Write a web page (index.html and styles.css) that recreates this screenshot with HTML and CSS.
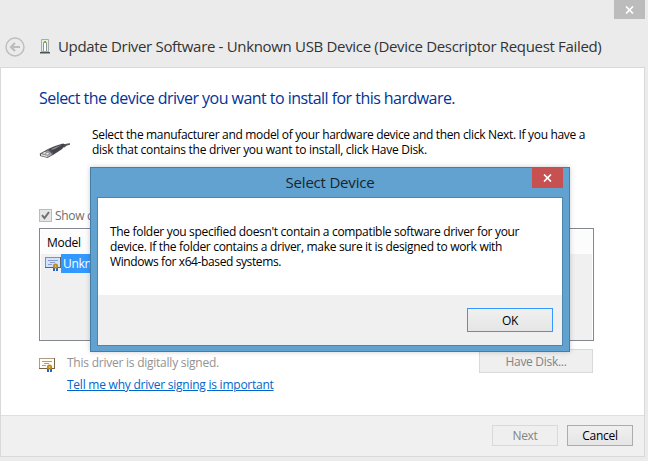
FILE: index.html
```html
<!DOCTYPE html>
<html lang="en">
<head>
<meta charset="utf-8">
<title>Update Driver Software</title>
<link rel="stylesheet" href="styles.css">
</head>
<body>
<svg class="defs" width="0" height="0">
  <symbol id="certificate" viewBox="0 0 16 16">
    <path class="frame-dark" d="M0 1h16v11H0z"/>
    <path class="frame-light" d="M0 1h15v10H0z"/>
    <path class="paper" d="M1 2h14v9H1z"/>
    <path d="M3 4.5h10M5 6.5h5M3 8.5h4" stroke="#8f9bd0"/>
    <path d="M8 11h2v4H8zM11 11h2v4h-2z" fill="#2463df"/>
    <circle cx="10.5" cy="10" r="2.6" fill="#b98a18"/>
    <circle cx="10.5" cy="10" r="1" fill="#e8b93d"/>
  </symbol>
</svg>
<main class="window">
  <div class="window-top"><button class="close" aria-label="Close"><svg width="9" height="8" viewBox="0 0 9 8"><path d="M1 .5l7 7M8 .5l-7 7"/></svg></button></div>
  <header class="title-row">
    <svg class="back" width="20" height="20" viewBox="0 0 20 20"><circle cx="10" cy="10" r="9"/><path d="M15 10H6.5M10 6L6 10l4 4"/></svg>
    <svg class="device" width="10" height="15" viewBox="0 0 10 15"><path d="M1.5.5h7v12h-7z" fill="#e9eeee" stroke="#a5adad"/><path d="M3.5 12V3.5Q5 1.5 6.5 3.5V12" fill="#fff" stroke="#8c9696"/><path d="M4 2h2v2H4z" fill="#67bd20"/><path d="M0 13h10v1.5H0z" fill="#4f5454"/><path d="M1 12h8v1H1z" fill="#aaa"/></svg>
    <h1>Update Driver Software - Unknown USB Device (Device Descriptor Request Failed)</h1>
  </header>
  <section class="client">
    <div class="page">
      <h2>Select the device driver you want to install for this hardware.</h2>
      <div class="intro">
        <svg width="32" height="18" viewBox="0 0 32 18"><path d="M23 4Q26 1.2 31 1.2v1.6q-3 0-6 3z" fill="#55555b"/><path d="M9 7L16 4l8-2.6 2.2 1.2-3 4.4L14 13l-2-2z" fill="#43434b"/><path d="M11 7.5l6-2.8 6-2-8 4.8z" fill="#8b8b93"/><path d="M.8 11.5L9 7l5 3.5V13l-5.5 3L1 14z" fill="#5a5a60"/><path d="M2 11.6L9 8.6l3.5 2.6-4 2.6z" fill="#9a9a9e"/><path d="M2 12l6.5 1.8v1.4L2 13.6z" fill="#e4e4e4"/><path d="M8.5 13.8l4-2.4v1.4l-4 2.3z" fill="#c6c6c8"/><path d="M4.5 11.3l2-.8M7.5 12.2l2-.9" stroke="#f4f4f4" stroke-width="1.3"/></svg>
        <p><span class="i1">Select the manufacturer and model of your hardware device and then click Next. If you have a</span><span class="i2">disk that contains the driver you want to install, click Have Disk.</span></p>
      </div>
      <div class="check-row"><span class="checkbox"><svg width="11" height="11" viewBox="0 0 11 11"><path d="M2 5.2l2.5 3L9 2"/></svg></span><span>Show c</span></div>
      <div class="list">
        <div class="list-head">Model</div>
        <div class="list-item"><svg class="blue" width="16" height="16"><use href="#certificate"/></svg><span>Unkn</span></div>
      </div>
      <div class="signed">
        <svg width="16" height="16"><use href="#certificate"/></svg>
        <div class="signed-text"><div class="status">This driver is digitally signed.</div><a>Tell me why driver signing is important</a></div>
        <button class="btn disk disabled">Have Disk...</button>
      </div>
    </div>
    <footer><button class="btn disabled">Next</button><button class="btn">Cancel</button></footer>
  </section>
</main>
<section class="dialog" role="dialog">
  <div class="dialog-title"><span>Select Device</span><button class="close red" aria-label="Close"><svg width="9" height="8" viewBox="0 0 9 8"><path d="M1 .5l7 7M8 .5l-7 7"/></svg></button></div>
  <div class="dialog-body">
    <p><span class="d1">The folder you specified doesn't contain a compatible software driver for your</span><span class="d2">device. If the folder contains a driver, make sure it is designed to work with</span><span class="d3">Windows for x64-based systems.</span></p>
    <div class="dialog-footer"><button class="btn ok">OK</button></div>
  </div>
</section>
</body>
</html>
```

FILE: styles.css
```css
* { box-sizing: border-box; }
body { margin: 0; width: 648px; height: 461px; overflow: hidden; position: relative; background: #ebebeb; color: #000; font: 12px/15px "Open Sans", "Noto Sans", sans-serif; letter-spacing: -.3px; }
h1, h2, p { margin: 0; font-weight: 400; white-space: nowrap; }
p span { display: block; }
button { font: inherit; letter-spacing: inherit; padding: 0; }
.defs { display: block; height: 0; }
.window-top { height: 27px; display: flex; justify-content: flex-end; padding-right: 3px; }
.close { width: 31px; height: 19px; border: 0; background: #bcbcbc; display: flex; align-items: center; justify-content: center; }
.close path { stroke: #fff; stroke-width: 1.7; fill: none; }
.title-row { height: 40px; display: flex; align-items: center; padding-left: 5px; }
.back { fill: none; stroke: #bdbdbd; stroke-width: 1.4; margin-right: 15px; }
.back path { stroke-width: 2.2; }
.device { margin-right: 8px; margin-top: -2px; }
h1 { font-size: 15px; line-height: 20px; margin-top: -2px; letter-spacing: -.325px; color: #333; }
.client { width: 645px; height: 390px; border: 1px solid #d9d9d9; background: #fff; display: flex; flex-direction: column; }
.page { height: 347px; padding: 19px 50px 0 38px; }
h2 { font-size: 16px; line-height: 22px; letter-spacing: -.54px; color: #039; }
.intro { display: flex; height: 81px; margin-top: 18px; }
.intro svg { margin-top: 15px; }
.intro p { margin-left: 21px; }
.i1 { letter-spacing: -.33px; }
.i2 { letter-spacing: -.27px; }
.check-row { height: 13px; margin-top: 1px; display: flex; align-items: center; gap: 3px; color: #6d6d6d; }
.checkbox { width: 13px; height: 13px; border: 1px solid #bcbcbc; background: #e6e6e6; display: flex; }
.checkbox path { fill: none; stroke: #707070; stroke-width: 2; }
.list { height: 113px; width: 555px; margin-top: 6px; border: 1px solid #828790; padding: 1px; background: #fff; }
.list-head { height: 24px; padding: 5px 6px; background: #fcfcfc; }
.list-item { display: flex; height: 86px; padding: 0 0 0 4px; background: #f0f0f0; }
.list-item span { width: 32px; height: 19px; line-height: 19px; padding-left: 2px; background: #39f; color: #fff; }
.list-item svg { margin-top: 2px; }
.frame-dark { fill: var(--frame-dark, #7c6244); }
.frame-light { fill: var(--frame-light, #b09c80); }
.paper { fill: var(--paper, #fffdf7); }
.blue { --frame-dark: #59646c; --frame-light: #87939b; --paper: #cfe5fb; }
.signed { display: flex; padding-top: 8px; }
.signed > svg { margin-top: 8px; }
.signed-text { margin-left: 12px; padding-top: 6px; width: 412px; letter-spacing: -.24px; }
.status { color: #929292; height: 22px; }
a { color: #06c; text-decoration: underline; }
.btn { width: 66px; height: 21px; border: 1px solid #acacac; background: linear-gradient(#f0f0f0, #e5e5e5); color: #000; }
.btn.disabled { border-color: #d9d9d9; background: #efefef; color: #838383; }
.btn.disk { width: 114px; height: 24px; }
footer { height: 41px; border-top: 1px solid #dfdfdf; background: #f0f0f0; display: flex; justify-content: flex-end; gap: 9px; padding: 9px 11px 0 0; }
.dialog { position: absolute; left: 90px; top: 167px; width: 480px; height: 185px; border: 1px solid #467da5; background: #61a2d0; padding: 0 6px 6px; box-shadow: 0 0 5px #0003; }
.dialog-title { height: 29px; position: relative; text-align: center; font-size: 15px; line-height: 29px; color: #17242e; letter-spacing: -.2px; }
.red { position: absolute; right: 0; top: 0; height: 20px; background: #c75050; }
.dialog-body { height: 149px; border: 1px solid #4b86ae; background: #fff; }
.dialog-body p { height: 97px; padding: 26px 0 0 12px; }
.d1 { letter-spacing: -.32px; }
.d2 { letter-spacing: -.32px; }
.d3 { letter-spacing: -.39px; }
.dialog-footer { height: 50px; background: #f0f0f0; display: flex; justify-content: flex-end; padding: 13px 9px 0 0; }
.btn.ok { width: 86px; height: 24px; border-color: #39f; }
```
